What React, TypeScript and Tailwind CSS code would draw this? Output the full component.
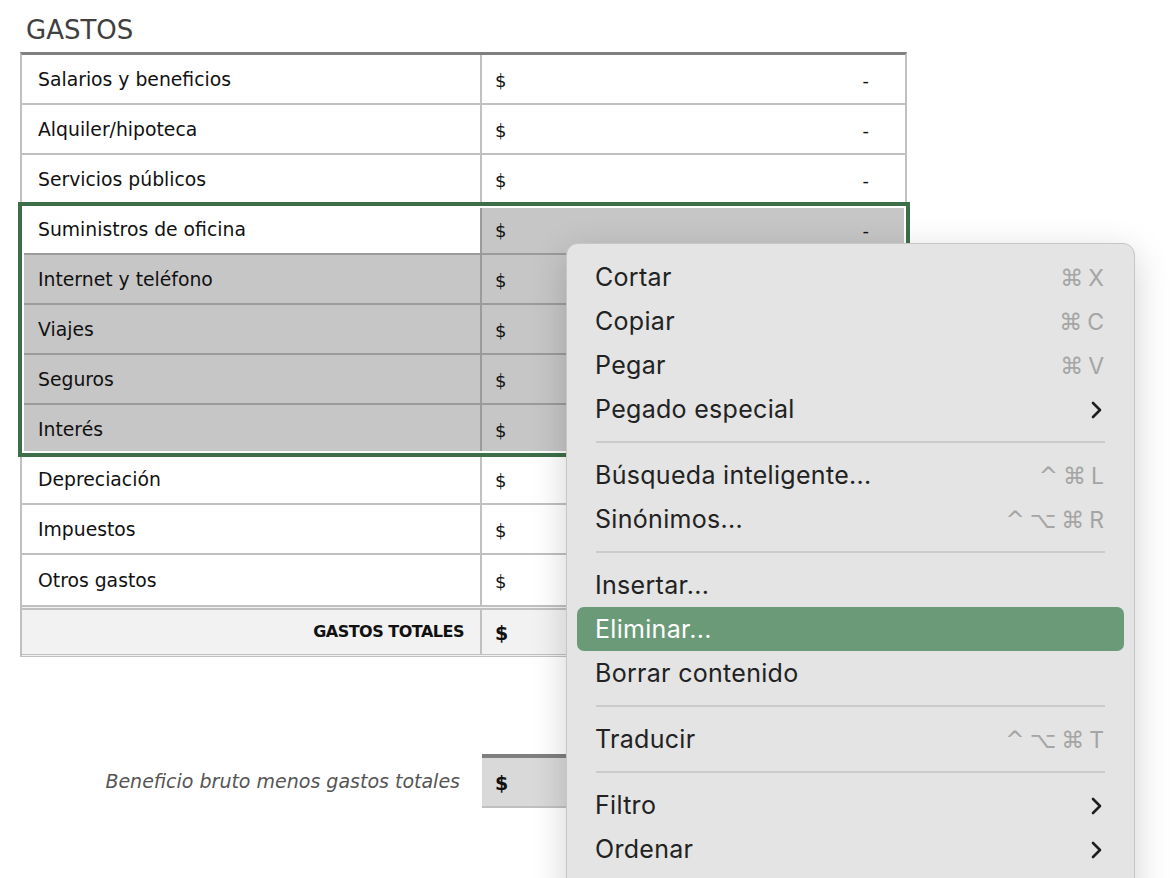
import React from 'react';

type Row = { label: string; sel?: boolean; active?: boolean; dash?: boolean };

const rows: Row[] = [
  { label: 'Salarios y beneficios', dash: true },
  { label: 'Alquiler/hipoteca', dash: true },
  { label: 'Servicios públicos', dash: true },
  { label: 'Suministros de oficina', sel: true, active: true, dash: true },
  { label: 'Internet y teléfono', sel: true },
  { label: 'Viajes', sel: true },
  { label: 'Seguros', sel: true },
  { label: 'Interés', sel: true },
  { label: 'Depreciación' },
  { label: 'Impuestos' },
  { label: 'Otros gastos' },
];

type MenuEntry =
  | { kind: 'item'; label: string; keys?: string[]; sub?: boolean; hot?: boolean }
  | { kind: 'sep' };

const menu: MenuEntry[] = [
  { kind: 'item', label: 'Cortar', keys: ['⌘', 'X'] },
  { kind: 'item', label: 'Copiar', keys: ['⌘', 'C'] },
  { kind: 'item', label: 'Pegar', keys: ['⌘', 'V'] },
  { kind: 'item', label: 'Pegado especial', sub: true },
  { kind: 'sep' },
  { kind: 'item', label: 'Búsqueda inteligente...', keys: ['^', '⌘', 'L'] },
  { kind: 'item', label: 'Sinónimos...', keys: ['^', '⌥', '⌘', 'R'] },
  { kind: 'sep' },
  { kind: 'item', label: 'Insertar...' },
  { kind: 'item', label: 'Eliminar...', hot: true },
  { kind: 'item', label: 'Borrar contenido' },
  { kind: 'sep' },
  { kind: 'item', label: 'Traducir', keys: ['^', '⌥', '⌘', 'T'] },
  { kind: 'sep' },
  { kind: 'item', label: 'Filtro', sub: true },
  { kind: 'item', label: 'Ordenar', sub: true },
];

const Chevron = () => (
  <svg width="12" height="18" viewBox="0 0 12 18" className="mr-[2px]">
    <polyline points="3,2 10,9 3,16" fill="none" stroke="#1f1f1f" strokeWidth="2.6" strokeLinecap="round" strokeLinejoin="round" />
  </svg>
);

const ContextMenu: React.FC = () => (
  <div
    className="absolute left-[566px] top-[243px] w-[569px] h-[680px] rounded-[12px] border border-[#c6c6c6] bg-[#e3e4e3] pt-[11px] px-[10px] shadow-[0_10px_36px_rgba(0,0,0,0.18)]"
    style={{ fontFamily: 'Inter, "DejaVu Sans", sans-serif' }}
  >
    {menu.map((m, i) =>
      m.kind === 'sep' ? (
        <div key={i} className="h-[22px] flex items-center px-[19px]">
          <div className="h-[2px] w-full bg-[#cbcbcb]" />
        </div>
      ) : (
        <div
          key={i}
          className={`h-[44px] flex items-center justify-between pl-[18px] pr-[20px] pt-[2px] rounded-[7px] text-[25px] tracking-[0.3px] ${
            m.hot ? 'bg-[#6a9a78] text-white' : 'text-[#222222]'
          }`}
        >
          <span>{m.label}</span>
          {m.keys && (
            <span className="flex items-center gap-[5px] text-[23px] tracking-normal text-[#a5a5a5]">
              {m.keys.map((k, j) => (
                <span key={j} style={{ fontFamily: /[A-Z]/.test(k) ? 'Inter, sans-serif' : '"DejaVu Sans", sans-serif' }}>
                  {k}
                </span>
              ))}
            </span>
          )}
          {m.sub && <Chevron />}
        </div>
      )
    )}
  </div>
);

export default function App() {
  return (
    <div
      className="relative w-[1170px] h-[878px] overflow-hidden bg-white text-[#111111]"
      style={{ fontFamily: '"DejaVu Sans", sans-serif' }}
    >
      <div className="pl-[20px] w-[907px]">
        <div className="h-[52px] pl-[6px] pt-[15px] text-[26px] leading-[30px] text-[#404040]">GASTOS</div>

        <div className="border-t-[3px] border-t-[#808080] border-x-2 border-x-[#c0c0c0]">
          {rows.map((r, i) => {
            const line = r.sel ? 'border-[#9b9b9b]' : 'border-[#c0c0c0]';
            const last = i === rows.length - 1;
            return (
              <div key={i} className={`flex h-[50px] ${last ? '' : 'border-b-2'} ${line}`}>
                <div
                  className={`w-[460px] flex items-center pl-[16px] pt-[2px] text-[18.8px] border-r-2 ${line} ${
                    r.sel && !r.active ? 'bg-[#c6c6c6]' : 'bg-white'
                  }`}
                >
                  {r.label}
                </div>
                <div className={`flex-1 flex items-center justify-between pl-[13px] pr-[36px] text-[18px] pt-[3px] ${r.sel ? 'bg-[#c6c6c6]' : 'bg-white'}`}>
                  <span>$</span>
                  {r.dash && <span>-</span>}
                </div>
              </div>
            );
          })}
          <div className="flex h-[52px] bg-[#f2f2f2] border-t-[5px] border-double border-t-[#c0c0c0] border-b-[3px] border-b-[#c0c0c0]">
            <div className="w-[460px] flex items-center justify-end pr-[16px] text-[16px] font-bold tracking-[-0.5px] border-r-2 border-[#c0c0c0]">
              GASTOS TOTALES
            </div>
            <div className="flex-1 flex items-center pl-[13px] pt-[3px] text-[19px] font-bold">$</div>
          </div>
        </div>

        <div className="mt-[97px] flex h-[54px]">
          <div className="w-[462px] flex items-center justify-end pr-[22px] text-[19px] italic text-[#555555]">
            Beneficio bruto menos gastos totales
          </div>
          <div className="flex-1 flex items-center pl-[13px] pt-[3px] bg-[#d9d9d9] border-t-4 border-t-[#7f7f7f] border-b-2 border-b-[#c0c0c0] text-[19px] font-bold">
            $
          </div>
        </div>
      </div>

      {/* selection outline */}
      <div className="absolute left-[18px] top-[202px] w-[892px] h-[255px] border-4 border-[#3d6e48] shadow-[inset_0_0_0_2px_white]" />

      <ContextMenu />
    </div>
  );
}
